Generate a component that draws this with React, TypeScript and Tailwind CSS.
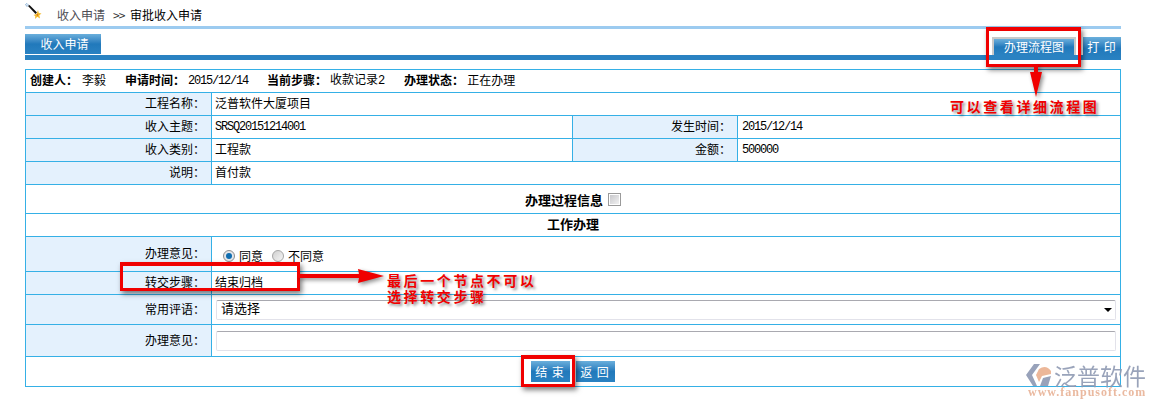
import React from 'react';

const cjk = "font-['Noto_Sans_CJK_SC',sans-serif]";
const mono = "font-['Liberation_Mono',monospace] tracking-[-1.2px]";
const blueBtn = 'bg-linear-to-b from-[#6aafdc] via-[#2179bb] to-[#2a82c2] text-white';

const Label: React.FC<{ width: string; children: React.ReactNode }> = ({ width, children }) => (
  <div className={`${width} shrink-0 h-full bg-[#e4f1fd] border-r border-[#35b0e6] flex items-center justify-end pr-[6px] pb-[2px]`}>
    {children}
  </div>
);

const Note: React.FC<{ className: string; children: React.ReactNode }> = ({ className, children }) => (
  <div className={`absolute text-[14px] leading-[16px] font-bold text-[#f00000] tracking-[2.6px] whitespace-nowrap [text-shadow:2px_2px_3px_rgba(0,0,0,0.45)] ${className}`}>
    {children}
  </div>
);

const RedBox: React.FC<{ className: string }> = ({ className }) => (
  <div className={`absolute border-[3px] border-t-[4px] border-[#f00000] shadow-[2px_3px_5px_rgba(0,0,0,0.5)] ${className}`} />
);

const App: React.FC = () => {
  return (
    <div className={`relative w-[1156px] h-[408px] overflow-hidden bg-white text-[12px] leading-[14px] text-black ${cjk}`}>
      <div className="ml-[25px] w-[1096px]">
        {/* breadcrumb */}
        <div className="h-[26px] flex items-center relative pt-[3px]">
          <svg width="17" height="17" viewBox="0 0 17 17" className="absolute left-0 top-[3px]">
            <path d="M0.500 1.500 L2 0.500 L3.500 2 L2 3.500 Z" fill="none" stroke="#8fb4d8" strokeWidth="1" />
            <path d="M3 3 L4.500 2 L12 9.500 L10.500 11 Z" fill="#111" />
            <path d="M13 7 L13.800 10 L16.500 10.500 L14.300 12.300 L15 15.500 L12.300 13.800 L10 16 L10.300 13 L8.500 12 L11.500 11 Z" fill="#f2bb2c" />
            <path d="M11.500 11 L13.300 11.500 L12.300 13.300 Z" fill="#d9601a" />
          </svg>
          <span className="ml-[32px] text-[#4d4d55]">收入申请</span>
          <span className="ml-[8px] w-[12px] tracking-[-1px] text-[#333]">&gt;&gt;</span>
          <span className="ml-[5px]">审批收入申请</span>
        </div>
        <div className="h-[3px] bg-[#9ccbf0]" />

        {/* tabs */}
        <div className="mt-[5px] h-[21px] flex justify-between items-start">
          <div className={`w-[76px] h-[20px] flex items-center justify-center pl-[3px] pb-[1px] ${blueBtn}`}>收入申请</div>
          <div className="flex h-[23px] mt-[3px] items-start">
            <div className={`w-[84px] h-[18px] flex items-center justify-center border-t-2 border-x-2 border-[#c9c9c9] pb-[1px] ${blueBtn}`}>办理流程图</div>
            <div className={`ml-[7px] w-[38px] h-[23px] flex justify-center pt-[3px] tracking-[1px] ${blueBtn}`}>打 印</div>
          </div>
        </div>
        <div className="h-[5px] bg-[#2a82c2]" />

        {/* form table */}
        <div className="mt-[9px] border border-[#35b0e6]">
          <div className="h-[23px] flex items-center border-b border-[#35b0e6] pl-[4px]">
            <b className="pb-[2px]">创建人：</b>
            <span className="ml-[4px] pb-[2px]">李毅</span>
            <b className="ml-[19px] pb-[2px]">申请时间：</b>
            <span className={`ml-[3px] ${mono}`}>2015/12/14</span>
            <b className="ml-[19px] pb-[2px]">当前步骤：</b>
            <span className="ml-[3px] pb-[2px]">收款记录<span className={mono}>2</span></span>
            <b className="ml-[20px] pb-[2px]">办理状态：</b>
            <span className="ml-[3px] pb-[2px]">正在办理</span>
          </div>

          <div className="h-[23px] flex items-center border-b border-[#35b0e6]">
            <Label width="w-[186px]">工程名称：</Label>
            <div className="pl-[3px] pb-[2px]">泛普软件大厦项目</div>
          </div>

          <div className="h-[23px] flex items-center border-b border-[#35b0e6]">
            <Label width="w-[186px]">收入主题：</Label>
            <div className={`w-[361px] shrink-0 h-full flex items-center pl-[3px] border-r border-[#35b0e6] ${mono}`}>SRSQ20151214001</div>
            <Label width="w-[165px]">发生时间：</Label>
            <div className={`pl-[4px] ${mono}`}>2015/12/14</div>
          </div>

          <div className="h-[23px] flex items-center border-b border-[#35b0e6]">
            <Label width="w-[186px]">收入类别：</Label>
            <div className="w-[361px] shrink-0 h-full flex items-center pl-[3px] pb-[2px] border-r border-[#35b0e6]">工程款</div>
            <Label width="w-[165px]">金额：</Label>
            <div className={`pl-[4px] ${mono}`}>500000</div>
          </div>

          <div className="h-[23px] flex items-center border-b border-[#35b0e6]">
            <Label width="w-[186px]">说明：</Label>
            <div className="pl-[3px] pb-[2px]">首付款</div>
          </div>

          <div className="h-[29px] flex items-center justify-center border-b border-[#35b0e6] pt-[2px] text-[13px] font-bold">
            办理过程信息
            <span className="ml-[5px] -mt-[2px] w-[13px] h-[13px] border border-[#9a9a9a] bg-linear-to-br from-[#c4c4c8] to-[#f6f6f6] shadow-[inset_0_0_0_1px_#fff]" />
          </div>

          <div className="h-[23px] flex items-center justify-center border-b border-[#35b0e6] pb-[2px] text-[13px] font-bold">工作办理</div>

          <div className="h-[35px] flex items-center border-b border-[#35b0e6]">
            <Label width="w-[186px]">办理意见：</Label>
            <div className="pl-[11px] pt-[4px] flex items-center">
              <span className="w-[12px] h-[12px] rounded-full border border-[#8e8e8e] bg-[#e4e6ea] flex items-center justify-center">
                <span className="w-[6px] h-[6px] rounded-full bg-[#0f6db0]" />
              </span>
              <span className="ml-[4px]">同意</span>
              <span className="ml-[9px] w-[12px] h-[12px] rounded-full border border-[#a5a5a5] bg-linear-to-br from-[#cfcfcf] to-[#f7f7f7]" />
              <span className="ml-[4px]">不同意</span>
            </div>
          </div>

          <div className="h-[23px] flex items-center border-b border-[#35b0e6]">
            <Label width="w-[186px]">转交步骤：</Label>
            <div className="pl-[3px] pb-[2px]">结束归档</div>
          </div>

          <div className="h-[30px] flex items-center border-b border-[#35b0e6]">
            <Label width="w-[186px]">常用评语：</Label>
            <div className="relative ml-[4px] w-[900px] h-[20px]">
              <select className="appearance-none w-full h-full pl-[4px] pb-[3px] rounded-[2px] border border-[#e2e2ea] border-t-[#a9a9b0] bg-white text-[13px] leading-[14px] outline-none">
                <option>请选择</option>
              </select>
              <span className="absolute right-[4px] top-[8px] border-x-[4px] border-x-transparent border-t-[4px] border-t-black" />
            </div>
          </div>

          <div className="h-[32px] flex items-center border-b border-[#35b0e6]">
            <Label width="w-[186px]">办理意见：</Label>
            <input className="ml-[4px] w-[900px] h-[20px] rounded-[2px] border border-[#e2e2ea] border-t-[#a9a9b0] bg-white outline-none" />
          </div>

          <div className="h-[29px] flex items-start justify-center pt-[4px]">
            <div className={`ml-[-1px] w-[39px] h-[21px] flex items-center justify-center tracking-[1px] ${blueBtn}`}>结 束</div>
            <div className={`ml-[6px] w-[39px] h-[21px] flex items-center justify-center tracking-[1px] ${blueBtn}`}>返 回</div>
          </div>
        </div>
      </div>

      {/* annotations */}
      <RedBox className="left-[986px] top-[27px] w-[95px] h-[40px]" />
      <svg width="16" height="34" viewBox="0 0 16 34" className="absolute left-[1028px] top-[65px] drop-shadow-[2px_2px_2px_rgba(0,0,0,0.45)]">
        <path d="M6 0 H10 V7 H14 L8 32 L2 7 H6 Z" fill="#f00000" />
      </svg>
      <Note className="left-[950px] top-[98px]">可以查看详细流程图</Note>

      <RedBox className="left-[120px] top-[262px] w-[180px] h-[29px]" />
      <svg width="88" height="16" viewBox="0 0 88 16" className="absolute left-[298px] top-[268px] drop-shadow-[2px_2px_2px_rgba(0,0,0,0.45)]">
        <path d="M0 6 H61 L60 1 L86 8 L60 15 L61 10 H0 Z" fill="#f00000" />
      </svg>
      <Note className="left-[387px] top-[272px]">最后一个节点不可以<br />选择转交步骤</Note>

      <RedBox className="left-[521px] top-[355px] w-[54px] h-[32px]" />

      {/* logo watermark */}
      <div className="absolute left-[1026px] top-[363px] w-[124px] opacity-90">
        <div className="flex items-center h-[24px]">
          <svg width="26" height="24" viewBox="0 0 26 24">
            <path d="M8 1 H14 L6 12 L11 23 H7 L0 12 Z" fill="#8d99b3" />
            <path d="M13 6 Q20 1 25 8 L25 11 L16 13 L13 19 L10 12 Z" fill="#eab08e" />
            <path d="M25 13 L22 23 H14 L17 15 Z" fill="#8d99b3" />
          </svg>
          <span className="ml-[2px] text-[23px] leading-[24px] text-[#8f9ab3] whitespace-nowrap">泛普软件</span>
        </div>
        <div className="ml-[2px] font-['Liberation_Serif',serif] font-bold text-[12px] leading-[11px] tracking-[1px] text-[#e8b296] whitespace-nowrap">www.fanpusoft.com</div>
      </div>
    </div>
  );
};

export default App;
